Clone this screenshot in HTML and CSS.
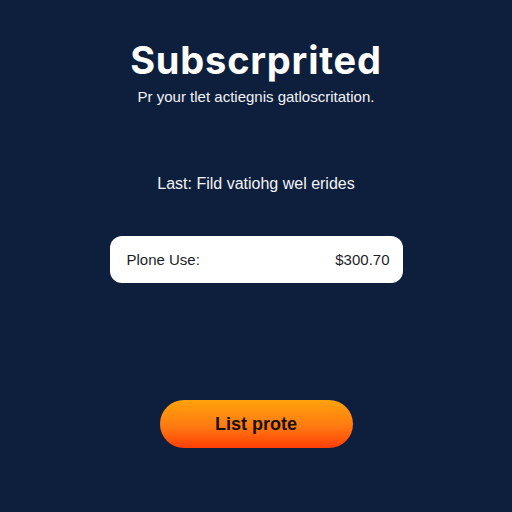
FILE: index.html
```html
<!DOCTYPE html>
<html lang="en">
<head>
    <meta charset="UTF-8">
    <meta name="viewport" content="width=device-width, initial-scale=1.0">
    <title>Subscrprited</title>
    <link rel="stylesheet" href="styles.css">
</head>
<body>
    <div class="page">
        <h1 class="title">Subscrprited</h1>
        <p class="subtitle">Pr your tlet actiegnis gatloscritation.</p>

        <p class="last">Last: Fild vatiohg wel erides</p>

        <!-- riga del piano -->
        <div class="plan-card">
            <span class="plan-name">Plone Use:</span>
            <span class="plan-price">$300.70</span>
        </div>

        <button class="main-button">List prote</button>
    </div>
</body>
</html>
```

FILE: styles.css
```css
body {
    margin: 0;
    background-color: #0e1f3d;
    font-family: "Liberation Sans", Arial, sans-serif;
    color: #ffffff;
}
.page {
    display: flex;
    flex-direction: column;
    align-items: center;
    height: 512px;
}
.title {
    margin: 38px 0 0;
    font-family: Inter, "Liberation Sans", sans-serif;
    font-size: 38px;
    font-weight: 700;
    letter-spacing: 0.8px;
    line-height: 44px;
}
.subtitle {
    margin: 6px 0 0;
    font-size: 15px;
    line-height: 18px;
    color: #f2f4f8;
}
.last {
    margin: 68px 0 0;
    font-size: 16px;
    line-height: 20px;
    color: #f2f4f8;
}
.plan-card {
    margin-top: 42px;
    width: 293px;
    height: 47px;
    box-sizing: border-box;
    padding: 0 13px 0 17px;
    display: flex;
    align-items: center;
    justify-content: space-between;
    background-color: #ffffff;
    border-radius: 12px;
    color: #1b1e26;
    font-size: 15px;
}
.plan-price {
    font-size: 15px;
}
.main-button {
    margin-top: 117px;
    width: 193px;
    height: 48px;
    border: none;
    border-radius: 24px;
    background: linear-gradient(to bottom, #ffa20c, #ff7a12 55%, #ff3e05);
    color: #1a1009;
    font-family: "Liberation Sans", Arial, sans-serif;
    font-size: 18px;
    font-weight: 700;
    cursor: pointer;
}
```
